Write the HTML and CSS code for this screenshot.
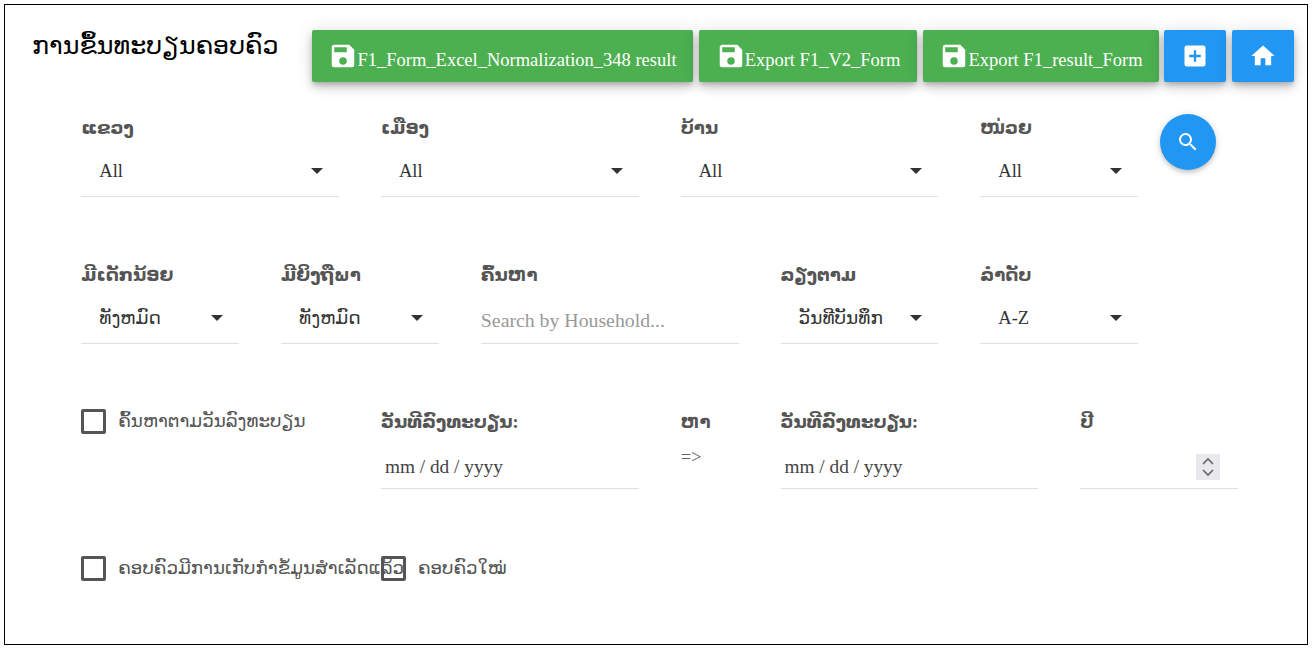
FILE: index.html
```html
<!DOCTYPE html>
<html lang="lo">
<head>
<meta charset="utf-8">
<title>ການຂຶ້ນທະບຽນຄອບຄົວ</title>
<link rel="stylesheet" href="styles.css">
</head>
<body>
<main class="frame">
  <header class="topbar">
    <h1 class="title">ການຂຶ້ນທະບຽນຄອບຄົວ</h1>
    <div class="actions">
      <button class="btn btn-green btn-a"><svg class="save" viewBox="0 0 24 24"><path d="M17 3H5a2 2 0 0 0-2 2v14a2 2 0 0 0 2 2h14a2 2 0 0 0 2-2V7l-4-4zm-5 16a3 3 0 1 1 0-6 3 3 0 0 1 0 6zm3-10H5V5h10v4z"/></svg><span class="btn-text">F1_Form_Excel_Normalization_348 result</span></button>
      <button class="btn btn-green btn-b"><svg class="save" viewBox="0 0 24 24"><path d="M17 3H5a2 2 0 0 0-2 2v14a2 2 0 0 0 2 2h14a2 2 0 0 0 2-2V7l-4-4zm-5 16a3 3 0 1 1 0-6 3 3 0 0 1 0 6zm3-10H5V5h10v4z"/></svg><span class="btn-text">Export F1_V2_Form</span></button>
      <button class="btn btn-green btn-c"><svg class="save" viewBox="0 0 24 24"><path d="M17 3H5a2 2 0 0 0-2 2v14a2 2 0 0 0 2 2h14a2 2 0 0 0 2-2V7l-4-4zm-5 16a3 3 0 1 1 0-6 3 3 0 0 1 0 6zm3-10H5V5h10v4z"/></svg><span class="btn-text">Export F1_result_Form</span></button>
      <button class="btn btn-blue" aria-label="add"><svg class="icon" viewBox="0 0 24 24"><path d="M19 3H5a2 2 0 0 0-2 2v14a2 2 0 0 0 2 2h14a2 2 0 0 0 2-2V5a2 2 0 0 0-2-2zm-2 10h-4v4h-2v-4H7v-2h4V7h2v4h4v2z"/></svg></button>
      <button class="btn btn-blue" aria-label="home"><svg class="icon" viewBox="0 0 24 24"><path d="M10 20v-6h4v6h5v-8h3L12 3 2 12h3v8z"/></svg></button>
    </div>
  </header>

  <section class="grid row-1">
    <div class="field c3"><span class="label">ແຂວງ</span><div class="select"><span>All</span><i class="caret"></i></div></div>
    <div class="field c3"><span class="label">ເມືອງ</span><div class="select"><span>All</span><i class="caret"></i></div></div>
    <div class="field c3"><span class="label">ບ້ານ</span><div class="select"><span>All</span><i class="caret"></i></div></div>
    <div class="field c2"><span class="label">ໜ່ວຍ</span><div class="select"><span>All</span><i class="caret"></i></div></div>
    <div class="c1 search-cell"><button class="fab" aria-label="search"><svg class="icon-s" viewBox="0 0 24 24"><path d="M15.5 14h-.79l-.28-.27A6.47 6.47 0 0 0 16 9.5 6.5 6.5 0 1 0 9.5 16c1.61 0 3.09-.59 4.23-1.57l.27.28v.79l5 4.99L20.49 19l-4.99-5zm-6 0C7.01 14 5 11.99 5 9.5S7.01 5 9.5 5 14 7.01 14 9.5 11.99 14 9.5 14z"/></svg></button></div>
  </section>

  <section class="grid row-2">
    <div class="field c2"><span class="label">ມີເດັກນ້ອຍ</span><div class="select"><span>ທັງຫມົດ</span><i class="caret"></i></div></div>
    <div class="field c2"><span class="label">ມີຍິງຖືພາ</span><div class="select"><span>ທັງຫມົດ</span><i class="caret"></i></div></div>
    <div class="field c3"><span class="label">ຄົ້ນຫາ</span><input class="text-input" placeholder="Search by Household..."></div>
    <div class="field c2"><span class="label">ລຽງຕາມ</span><div class="select"><span>ວັນທີບັນທຶກ</span><i class="caret"></i></div></div>
    <div class="field c2"><span class="label">ລຳດັບ</span><div class="select"><span>A-Z</span><i class="caret"></i></div></div>
  </section>

  <section class="grid row-3">
    <label class="check c3"><i class="box"></i><span>ຄົ້ນຫາຕາມວັນລົງທະບຽນ</span></label>
    <div class="field c3"><span class="label">ວັນທີລົງທະບຽນ:</span><div class="date">mm / dd / yyyy</div></div>
    <div class="field c1"><span class="label">ຫາ</span><div class="arrow">=&gt;</div></div>
    <div class="field c3"><span class="label">ວັນທີລົງທະບຽນ:</span><div class="date">mm / dd / yyyy</div></div>
    <div class="field c2"><span class="label">ປີ</span><div class="date number"><span class="spin"><svg viewBox="0 0 24 26"><path d="M7 10l5-5 5 5M7 16l5 5 5-5"/></svg></span></div></div>
  </section>

  <section class="grid row-4">
    <label class="check c3"><i class="box"></i><span class="nowrap">ຄອບຄົວມີການເກັບກຳຂໍ້ມູນສຳເລັດແລ້ວ</span></label>
    <label class="check c3"><i class="box"></i><span>ຄອບຄົວໃໝ່</span></label>
  </section>
</main>
</body>
</html>
```

FILE: styles.css
```css
* { box-sizing: border-box; }
html, body { margin: 0; padding: 0; background: #fff; }
body {
  padding: 4px 4px 3px 4px;
  font-family: "Liberation Serif", "DejaVu Serif", "DejaVu Sans", serif;
  color: #333;
  height: 648px;
  overflow: hidden;
}
.frame {
  width: 1304px;
  height: 641px;
  border: 1px solid #000;
  background: #fff;
  padding: 0 0 0 55.3px;
}
.topbar {
  display: flex;
  justify-content: space-between;
  height: 100px;
  margin-left: -55.3px;
  padding: 25px 13px 0 27px;
}
.title {
  margin: 0;
  font-size: 25.4px;
  line-height: 30px;
  font-weight: 400;
  color: #000;
}
.actions { display: flex; gap: 6px; }
.btn {
  display: flex;
  align-items: center;
  justify-content: center;
  height: 52px;
  padding: 0;
  border: 0;
  border-radius: 2px;
  color: #fff;
  font-family: inherit;
  font-size: 18.5px;
  box-shadow: 0 3px 5px -1px rgba(0,0,0,.2), 0 6px 10px 0 rgba(0,0,0,.14), 0 1px 18px 0 rgba(0,0,0,.12);
}
.btn-green { background: #4caf50; }
.btn-blue { background: #2196f3; width: 62px; }
.btn-a { width: 381px; }
.btn-b { width: 218px; }
.btn-c { width: 236px; margin-right: -1px; }
.save { width: 30px; height: 30px; fill: #fff; margin-right: -1px; flex: none; }
.btn-text { margin-top: 8px; white-space: nowrap; }
.icon { width: 28px; height: 28px; fill: #fff; }
.icon-s { width: 24px; height: 24px; fill: #fff; }

.grid { display: grid; grid-template-columns: repeat(12, 99.9px); }
.c1 { grid-column: span 1; }
.c2 { grid-column: span 2; }
.c3 { grid-column: span 3; }
.row-1 { height: 147px; }
.row-2 { height: 147px; }
.row-3 { height: 147px; }

.field { padding: 0 21px; display: flex; flex-direction: column; }
.label {
  font-size: 18.2px;
  line-height: 24px;
  font-weight: 700;
  color: #555;
  margin-top: 11px;
}
.select {
  display: flex;
  align-items: center;
  justify-content: space-between;
  height: 48px;
  margin-top: 9px;
  padding: 0 16px 3px 18px;
  border-bottom: 1px solid #e0e0e0;
  font-size: 18.5px;
  color: #333;
}
.caret {
  width: 0; height: 0;
  border-left: 6px solid transparent;
  border-right: 6px solid transparent;
  border-top: 6px solid #333;
}
.text-input {
  height: 48px;
  margin-top: 9px;
  width: 100%;
  border: 0;
  border-bottom: 1px solid #e0e0e0;
  padding: 2px 0 0;
  font: inherit;
  font-size: 19.8px;
  outline: 0;
}
.text-input::placeholder { color: #999; opacity: 1; }
.date {
  display: flex;
  align-items: center;
  height: 47px;
  margin-top: 8px;
  padding: 4px 0 0 4px;
  border-bottom: 1px solid #e0e0e0;
  font-size: 19.3px;
  color: #444;
}
.number { justify-content: flex-end; padding: 4px 18px 0 0; }
.spin {
  display: flex;
  align-items: center;
  justify-content: center;
  width: 24px;
  height: 26px;
  background: #e9e9ed;
}
.spin svg { width: 24px; height: 26px; fill: none; stroke: #666; stroke-width: 1.6; }
.arrow { font-size: 18.5px; color: #666; margin-top: 13px; }
.check {
  display: flex;
  align-items: flex-start;
  gap: 12px;
  padding: 10px 0 0 21px;
  font-size: 18.3px;
  color: #555;
  line-height: 24px;
}
.box {
  flex: none;
  width: 25px;
  height: 25px;
  border: 3px solid #555;
  border-radius: 2px;
}
.nowrap { white-space: nowrap; }
.search-cell { padding-top: 9px; padding-left: 1px; }
.fab {
  display: flex;
  align-items: center;
  justify-content: center;
  width: 56px;
  height: 56px;
  padding: 0;
  border: 0;
  border-radius: 50%;
  background: #2196f3;
  box-shadow: 0 3px 5px -1px rgba(0,0,0,.2), 0 1px 8px 0 rgba(0,0,0,.12);
}
```
